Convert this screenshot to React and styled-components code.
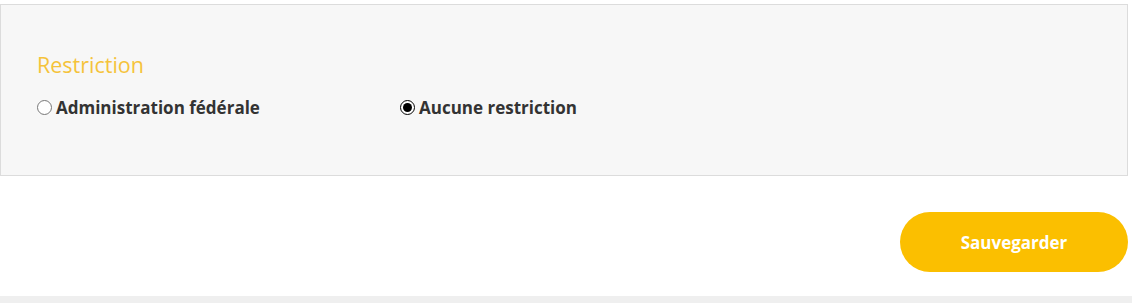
import React, { useState } from "react"
import styled, { createGlobalStyle } from "styled-components"

const GlobalStyle = createGlobalStyle`
    body {
        margin: 0;
        background: #fff;
        font-family: "Open Sans", "Liberation Sans", sans-serif;
    }
`

const options = [
    { id: 'federal', label: 'Administration fédérale' },
    { id: 'none', label: 'Aucune restriction' }
]

export default function App() {
    const [value, setValue] = useState('none')

    return (
        <>
            <GlobalStyle />
            <Page>
                <Panel>
                    <Title>Restriction</Title>
                    <Options>
                        {options.map(option => (
                            <Option key={option.id}>
                                <Radio
                                    type="radio"
                                    name="restriction"
                                    checked={value === option.id}
                                    onChange={() => setValue(option.id)}
                                />
                                {option.label}
                            </Option>
                        ))}
                    </Options>
                </Panel>
                <Actions>
                    <SaveButton type="button">Sauvegarder</SaveButton>
                </Actions>
            </Page>
            <Footer />
        </>
    )
}

const Page = styled.div`
    width: 1128px;
    padding-top: 4px;
`

const Panel = styled.section`
    box-sizing: border-box;
    height: 172px;
    background-color: #f7f7f7;
    border: 1px solid #dcdcdc;
    padding: 45px 36px 0;
`

const Title = styled.h2`
    margin: 0 0 17px;
    font-size: 21.5px;
    font-weight: 400;
    line-height: 29px;
    color: #f5c33b;
`

const Options = styled.div`
    display: grid;
    grid-template-columns: 363px auto;
    align-items: center;
`

const Option = styled.label`
    display: flex;
    align-items: center;
    font-size: 17px;
    font-weight: 700;
    line-height: 23px;
    color: #333;
    cursor: pointer;
`

const Radio = styled.input`
    width: 15px;
    height: 15px;
    margin: 0 4px 0 0;
    accent-color: #000;
`

const Actions = styled.div`
    display: flex;
    justify-content: flex-end;
    padding-top: 36px;
`

const SaveButton = styled.button`
    width: 228px;
    height: 60px;
    border: none;
    border-radius: 30px;
    background-color: #fbbf00;
    color: #fff;
    font-family: "Open Sans", "Liberation Sans", sans-serif;
    font-size: 17px;
    font-weight: 700;
    cursor: pointer;
`

const Footer = styled.div`
    margin-top: 24px;
    height: 20px;
    background-color: #efefef;
`
